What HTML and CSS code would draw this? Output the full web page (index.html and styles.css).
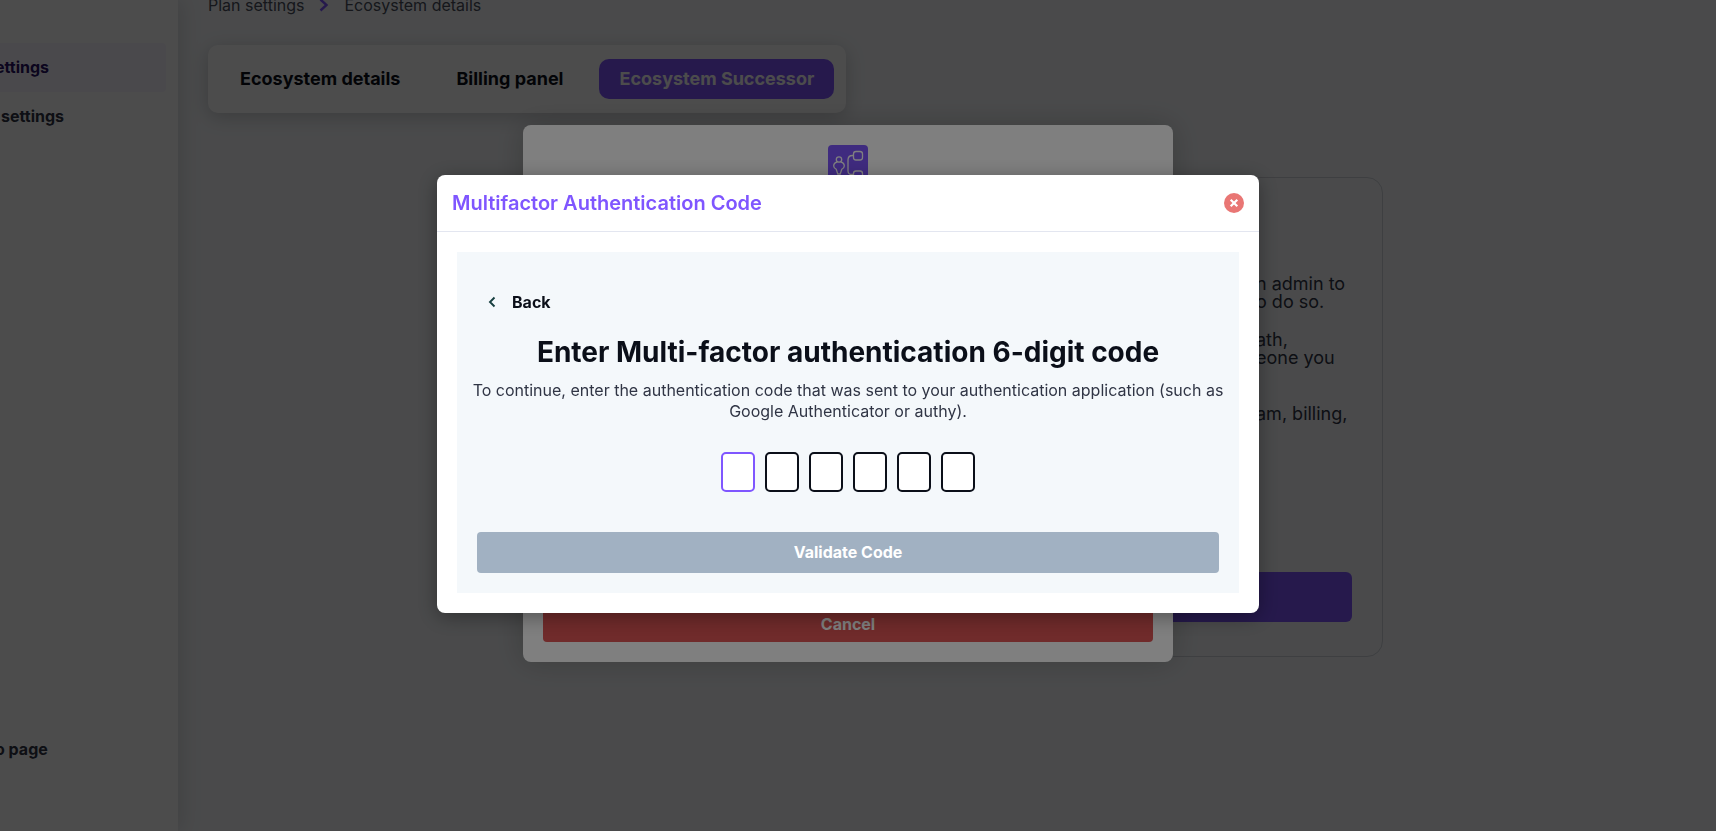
FILE: index.html
```html
<!DOCTYPE html>
<html lang="en">
<head>
<meta charset="utf-8">
<meta name="viewport" content="width=device-width, initial-scale=1">
<title>Ecosystem Successor</title>
<link rel="stylesheet" href="styles.css">
</head>
<body>
<div class="app">
  <aside class="sidebar">
    <nav class="side-nav">
      <a class="side-link side-link-active" href="#">ettings</a>
      <a class="side-link side-link-space" href="#">settings</a>
      <a class="side-link side-link-last" href="#">o page</a>
    </nav>
  </aside>
  <main class="main">
    <nav class="crumbs" aria-label="Breadcrumb">
      <a href="#">Plan settings</a>
      <svg width="10" height="14" viewBox="0 0 10 14" fill="none" stroke="#7f56ff" stroke-width="2.400"><path d="M1.500 1.500 7.500 7 1.500 12.500"/></svg>
      <a href="#">Ecosystem details</a>
    </nav>
    <div class="tabs">
      <button class="tab">Ecosystem details</button>
      <button class="tab">Billing panel</button>
      <button class="tab tab-active">Ecosystem Successor</button>
    </div>
    <section class="card">
      <div class="card-text">
        <p>n admin to<br>o do so.</p>
        <p>ath,<br>eone you</p>
        <p class="card-last">am, billing,</p>
      </div>
      <button class="card-action" aria-label="Add successor"></button>
    </section>
  </main>
</div>

<div class="overlay overlay-back">
  <div class="dialog">
    <svg class="dialog-icon" width="40" height="40" viewBox="0 0 40 40" fill="none" stroke="#fff" stroke-width="1.3">
      <rect width="40" height="40" rx="4" fill="#7f56ff" stroke="none"/>
      <circle cx="11" cy="14.500" r="2.700"/>
      <path d="M9 17c-2 .5-3.300 2-3.300 4 0 1.500 1.200 2.500 2.500 3.200L9.800 29h2.400l1.600-4.800c1.300-.7 2.500-1.700 2.500-3.200 0-2-1.300-3.500-3.300-4"/>
      <rect x="25.500" y="6.500" width="9" height="8.500" rx="2.500"/>
      <path d="M25.500 10.500h-1q-4.500 0-4.500 4.500v11q0 3.500 4 3.500h1.500"/>
      <rect x="25.500" y="26" width="9" height="8.500" rx="2.500"/>
    </svg>
    <button class="cancel">Cancel</button>
  </div>
</div>

<div class="overlay overlay-front">
  <div class="modal" role="dialog" aria-modal="true" aria-labelledby="modal-title">
    <header class="modal-head">
      <h2 class="modal-title" id="modal-title">Multifactor Authentication Code</h2>
      <button class="close" aria-label="Close">
        <svg width="20" height="20" viewBox="0 0 20 20"><circle cx="10" cy="10" r="10" fill="#e97674"/><path d="m6.700 6.700 6.600 6.600m0-6.600-6.600 6.600" stroke="#fff" stroke-width="2.200"/></svg>
      </button>
    </header>
    <form class="panel">
      <button class="back" type="button">
        <svg width="8" height="12" viewBox="0 0 8 12" fill="none" stroke="#173f3f" stroke-width="1.900"><path d="M6.500 1.500 2 6l4.500 4.500"/></svg>
        Back
      </button>
      <h1 class="heading">Enter Multi-factor authentication 6-digit code</h1>
      <p class="hint">To continue, enter the authentication code that was sent to your authentication application (such as Google Authenticator or authy).</p>
      <div class="digits">
        <input class="digit digit-active" maxlength="1" inputmode="numeric" aria-label="Digit 1">
        <input class="digit" maxlength="1" inputmode="numeric" aria-label="Digit 2">
        <input class="digit" maxlength="1" inputmode="numeric" aria-label="Digit 3">
        <input class="digit" maxlength="1" inputmode="numeric" aria-label="Digit 4">
        <input class="digit" maxlength="1" inputmode="numeric" aria-label="Digit 5">
        <input class="digit" maxlength="1" inputmode="numeric" aria-label="Digit 6">
      </div>
      <button class="validate" type="button">Validate Code</button>
    </form>
  </div>
</div>
</body>
</html>
```
FILE: styles.css
```css
* { box-sizing: border-box; }
body {
  margin: 0;
  background: #f7f9fc;
  color: #0b0f19;
  font: 16px/20px Inter, "Liberation Sans", sans-serif;
  overflow: hidden;
}
button, input { font: inherit; border: 0; padding: 0; }
a { color: inherit; text-decoration: none; }
h1, h2, p { margin: 0; }

.app { display: flex; height: 100vh; overflow: hidden; }
.sidebar {
  width: 178px;
  flex: none;
  background: #fff;
  box-shadow: 4px 0 20px rgba(0, 0, 0, .12);
}
.side-nav { display: flex; flex-direction: column; height: 100%; padding: 43px 12px 57px 0; }
.side-link {
  height: 49px;
  line-height: 49px;
  margin-left: -5px;
  font-weight: 700;
  color: #303545;
  border-radius: 4px;
}
.side-link-active { background: #f7f6fd; color: #2b1266; }
.side-link-space { margin-left: 1px; }
.side-link-last { margin-top: auto; }

.main { flex: 1; padding: 0 333px 0 30px; }
.crumbs { display: flex; align-items: center; gap: 15px; margin-top: -5px; color: #4a4f5c; }
.tabs {
  display: flex;
  width: fit-content;
  margin-top: 30px;
  padding: 14px 12px;
  gap: 16px;
  background: #fff;
  border-radius: 10px;
  box-shadow: 0 4px 20px rgba(0, 0, 0, .2);
}
.tab { height: 40px; padding: 0 20px; font-size: 18px; font-weight: 700; border-radius: 10px; background: none; color: #0b0f19; }
.tab-active { background: #7f56ff; color: #fff; }
.card {
  display: flex;
  flex-direction: column;
  width: 60%;
  height: 480px;
  margin: 64px 0 0 auto;
  padding: 97px 30px 34px;
  border: 1px solid #d0d3da;
  border-radius: 16px;
}
.card-text { align-self: flex-end; width: 96px; font-size: 18px; line-height: 18px; white-space: nowrap; color: #303545; }
.card-text p + p { margin-top: 20px; }
.card-text .card-last { margin-top: 38px; }
.card-action { height: 50px; margin-top: auto; border-radius: 6px; background: #7f56ff; }

.overlay { position: fixed; inset: 0; display: flex; align-items: center; justify-content: center; padding: 0 20px 44px 0; }
.overlay-back { background: rgba(0, 0, 0, .4); }
.overlay-front { background: rgba(0, 0, 0, .5); }
.dialog {
  display: flex;
  flex-direction: column;
  align-items: center;
  justify-content: space-between;
  width: 650px;
  height: 537px;
  padding: 20px;
  background: #fff;
  border-radius: 8px;
  box-shadow: 0 0 30px rgba(0, 0, 0, .2);
}
.cancel { width: 100%; height: 37px; border-radius: 4px; background: #e05656; color: #fff; font-weight: 700; }

.modal { width: 822px; background: #fff; border-radius: 8px; box-shadow: 0 4px 20px rgba(0, 0, 0, .35); }
.modal-head { display: flex; align-items: center; justify-content: space-between; height: 57px; padding: 0 15px; border-bottom: 1px solid #e3e6f0; }
.modal-title { font-size: 20px; line-height: 24px; font-weight: 600; color: #7f56ff; }
.close { display: flex; background: none; border-radius: 50%; }
.panel { display: flex; flex-direction: column; margin: 20px; padding: 40px 20px 20px; background: #f4f8fb; }
.back { display: flex; align-items: center; align-self: flex-start; gap: 16px; margin-left: 11px; background: none; font-weight: 700; color: #0b0f19; }
.heading { margin-top: 20px; font-size: 28px; line-height: 40px; font-weight: 700; text-align: center; white-space: nowrap; }
.hint { margin: 8px -10px 0; line-height: 21px; text-align: center; color: #303545; }
.digits { display: flex; justify-content: center; gap: 10px; margin: 30px 0 40px; }
.digit { width: 34px; height: 40px; border: 2px solid #0b0f19; border-radius: 5px; background: #fff; text-align: center; }
.digit-active { border-color: #7f56ff; }
.validate { height: 41px; border-radius: 4px; background: #a1b1c2; color: #fff; font-weight: 700; }
```
